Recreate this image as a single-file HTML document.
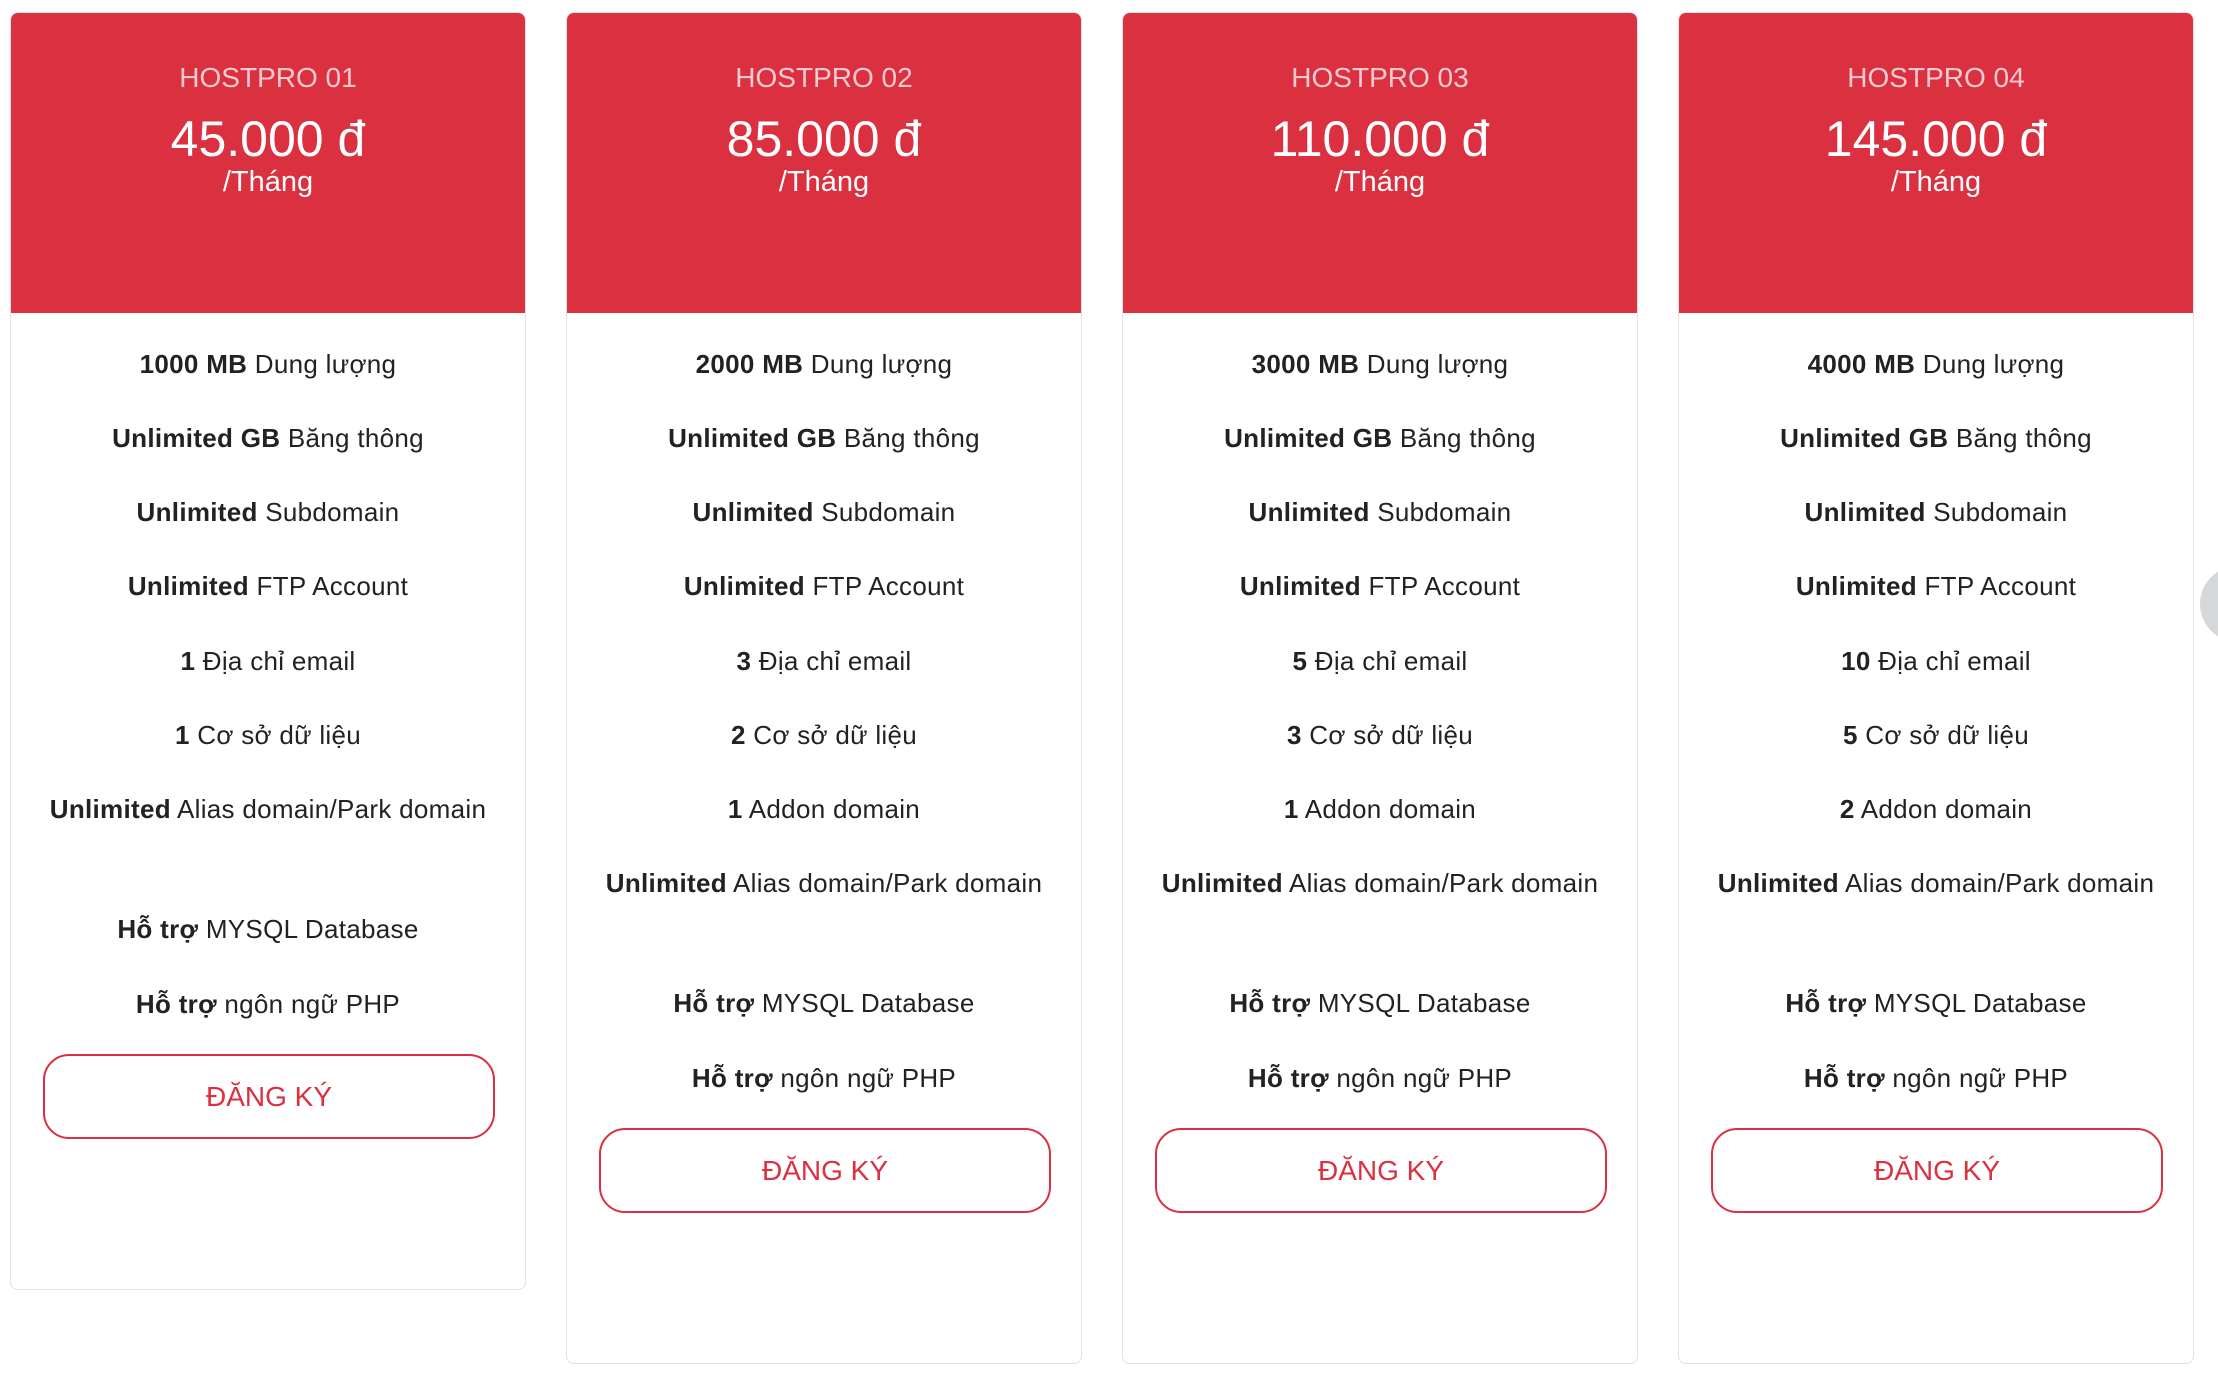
<!DOCTYPE html>
<html><head><meta charset="utf-8"><style>
html,body{margin:0;padding:0;background:#fff;width:2218px;height:1390px;overflow:hidden;position:relative;font-family:"Liberation Sans","DejaVu Sans",sans-serif;color:#222}
.card{position:absolute;top:12px;width:514px;border:1px solid #e2e2e2;border-radius:8px;background:#fff;overflow:hidden}
.head{position:absolute;left:-1px;top:-1px;width:516px;height:301px;background:#da3040}
.t{position:absolute;left:0;width:100%;text-align:center;color:#fff;white-space:nowrap}
.name{top:50px;font-size:28px;line-height:32px;color:#f6cbd0}
.price{top:99px;font-size:50px;line-height:56px}
.mon{top:153px;font-size:29px;line-height:34px}
.row{position:absolute;left:0;width:100%;text-align:center;font-size:26px;line-height:34px;white-space:nowrap;color:#222;letter-spacing:0.3px}
.row b{font-weight:bold}
.btn{position:absolute;left:32px;width:448px;height:81px;border:2px solid #da3040;border-radius:26px;color:#da3040;font-size:28px;line-height:81px;text-align:center}
.circ{position:absolute;left:2200px;top:566px;width:76px;height:76px;border-radius:50%;background:#d6d7d9}
</style></head><body>

<div class="card" style="left:10px;height:1276px">
<div class="head"><div class="t name">HOSTPRO 01</div><div class="t price">45.000 đ</div><div class="t mon">/Tháng</div></div>
<div class="row" style="top:334px"><b>1000 MB</b> Dung lượng</div>
<div class="row" style="top:408px"><b>Unlimited GB</b> Băng thông</div>
<div class="row" style="top:482px"><b>Unlimited</b> Subdomain</div>
<div class="row" style="top:556px"><b>Unlimited</b> FTP Account</div>
<div class="row" style="top:631px"><b>1</b> Địa chỉ email</div>
<div class="row" style="top:705px"><b>1</b> Cơ sở dữ liệu</div>
<div class="row" style="top:779px"><b>Unlimited</b> Alias domain/Park domain</div>
<div class="row" style="top:899px"><b>Hỗ trợ</b> MYSQL Database</div>
<div class="row" style="top:974px"><b>Hỗ trợ</b> ngôn ngữ PHP</div>
<div class="btn" style="top:1041px">ĐĂNG KÝ</div>
</div>

<div class="card" style="left:566px;height:1350px">
<div class="head"><div class="t name">HOSTPRO 02</div><div class="t price">85.000 đ</div><div class="t mon">/Tháng</div></div>
<div class="row" style="top:334px"><b>2000 MB</b> Dung lượng</div>
<div class="row" style="top:408px"><b>Unlimited GB</b> Băng thông</div>
<div class="row" style="top:482px"><b>Unlimited</b> Subdomain</div>
<div class="row" style="top:556px"><b>Unlimited</b> FTP Account</div>
<div class="row" style="top:631px"><b>3</b> Địa chỉ email</div>
<div class="row" style="top:705px"><b>2</b> Cơ sở dữ liệu</div>
<div class="row" style="top:779px"><b>1</b> Addon domain</div>
<div class="row" style="top:853px"><b>Unlimited</b> Alias domain/Park domain</div>
<div class="row" style="top:973px"><b>Hỗ trợ</b> MYSQL Database</div>
<div class="row" style="top:1048px"><b>Hỗ trợ</b> ngôn ngữ PHP</div>
<div class="btn" style="top:1115px">ĐĂNG KÝ</div>
</div>

<div class="card" style="left:1122px;height:1350px">
<div class="head"><div class="t name">HOSTPRO 03</div><div class="t price">110.000 đ</div><div class="t mon">/Tháng</div></div>
<div class="row" style="top:334px"><b>3000 MB</b> Dung lượng</div>
<div class="row" style="top:408px"><b>Unlimited GB</b> Băng thông</div>
<div class="row" style="top:482px"><b>Unlimited</b> Subdomain</div>
<div class="row" style="top:556px"><b>Unlimited</b> FTP Account</div>
<div class="row" style="top:631px"><b>5</b> Địa chỉ email</div>
<div class="row" style="top:705px"><b>3</b> Cơ sở dữ liệu</div>
<div class="row" style="top:779px"><b>1</b> Addon domain</div>
<div class="row" style="top:853px"><b>Unlimited</b> Alias domain/Park domain</div>
<div class="row" style="top:973px"><b>Hỗ trợ</b> MYSQL Database</div>
<div class="row" style="top:1048px"><b>Hỗ trợ</b> ngôn ngữ PHP</div>
<div class="btn" style="top:1115px">ĐĂNG KÝ</div>
</div>

<div class="card" style="left:1678px;height:1350px">
<div class="head"><div class="t name">HOSTPRO 04</div><div class="t price">145.000 đ</div><div class="t mon">/Tháng</div></div>
<div class="row" style="top:334px"><b>4000 MB</b> Dung lượng</div>
<div class="row" style="top:408px"><b>Unlimited GB</b> Băng thông</div>
<div class="row" style="top:482px"><b>Unlimited</b> Subdomain</div>
<div class="row" style="top:556px"><b>Unlimited</b> FTP Account</div>
<div class="row" style="top:631px"><b>10</b> Địa chỉ email</div>
<div class="row" style="top:705px"><b>5</b> Cơ sở dữ liệu</div>
<div class="row" style="top:779px"><b>2</b> Addon domain</div>
<div class="row" style="top:853px"><b>Unlimited</b> Alias domain/Park domain</div>
<div class="row" style="top:973px"><b>Hỗ trợ</b> MYSQL Database</div>
<div class="row" style="top:1048px"><b>Hỗ trợ</b> ngôn ngữ PHP</div>
<div class="btn" style="top:1115px">ĐĂNG KÝ</div>
</div>

<div class="circ"></div>
</body></html>
